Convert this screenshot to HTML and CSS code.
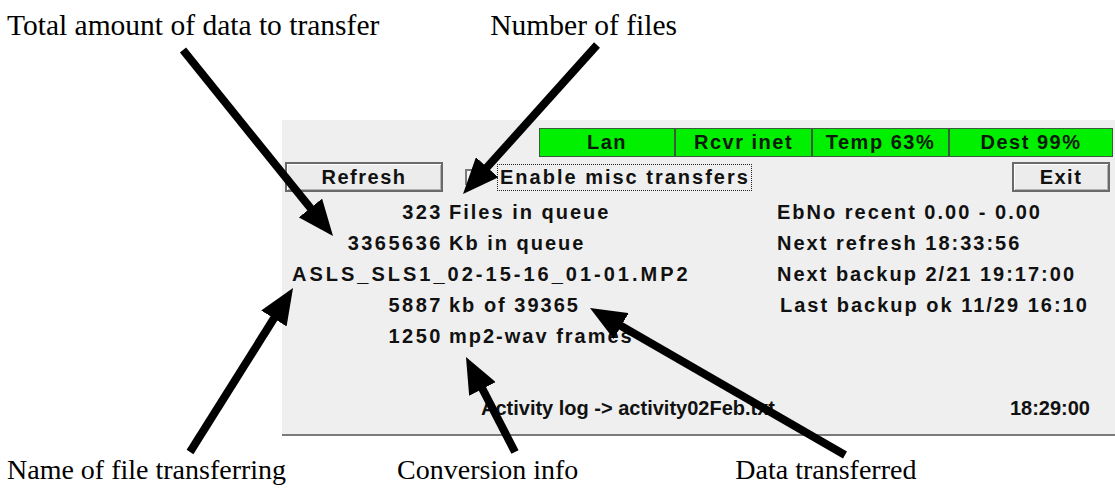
FILE: index.html
```html
<!DOCTYPE html>
<html>
<head>
<meta charset="utf-8">
<link rel="stylesheet" href="styles.css">
</head>
<body>
<div class="page">
  <div class="captions top">
    <span class="cap cap-total">Total amount of data to transfer</span>
    <span class="cap cap-files">Number of files</span>
  </div>

  <div class="panel">
    <div class="status">
      <div class="cell c1">Lan</div>
      <div class="cell c2">Rcvr inet</div>
      <div class="cell c3">Temp 63%</div>
      <div class="cell c4">Dest 99%</div>
    </div>
    <div class="toolbar">
      <div class="btn btn-refresh">Refresh</div>
      <div class="check"></div>
      <div class="focus">Enable misc transfers</div>
      <div class="btn btn-exit">Exit</div>
    </div>
    <div class="info">
      <div class="left">
        <div class="row"><span class="num">323</span><span class="lbl">Files in queue</span></div>
        <div class="row"><span class="num">3365636</span><span class="lbl">Kb in queue</span></div>
        <div class="row fname">ASLS_SLS1_02-15-16_01-01.MP2</div>
        <div class="row"><span class="num">5887</span><span class="lbl">kb of 39365</span></div>
        <div class="row"><span class="num">1250</span><span class="lbl">mp2-wav frames</span></div>
      </div>
      <div class="right">
        <div class="row">EbNo recent 0.00 - 0.00</div>
        <div class="row">Next refresh 18:33:56</div>
        <div class="row">Next backup 2/21 19:17:00</div>
        <div class="row last">Last backup ok 11/29 16:10</div>
      </div>
    </div>
    <div class="footer">
      <span class="log">Activity log -&gt; activity02Feb.txt</span>
      <span class="clock">18:29:00</span>
    </div>
  </div>

  <div class="captions bottom">
    <span class="cap cap-name">Name of file transferring</span>
    <span class="cap cap-conv">Conversion info</span>
    <span class="cap cap-data">Data transferred</span>
  </div>

  <svg class="arrows" width="1115" height="493" viewBox="0 0 1115 493">
    <defs>
      <marker id="ah" viewBox="0 0 36 30" refX="10" refY="15" markerWidth="36" markerHeight="30" markerUnits="userSpaceOnUse" orient="auto">
        <path d="M0,0 L36,15 L0,30 z" fill="#000"/>
      </marker>
    </defs>
    <g stroke="#000" stroke-width="8" marker-end="url(#ah)">
      <line x1="183" y1="50" x2="316.7" y2="215.8"/>
      <line x1="597" y1="45" x2="480.4" y2="174.7"/>
      <line x1="190" y1="452" x2="279.2" y2="310"/>
      <line x1="515" y1="452" x2="477.9" y2="380.1"/>
      <line x1="845" y1="455" x2="612.5" y2="321"/>
    </g>
  </svg>
</div>
</body>
</html>
```

FILE: styles.css
```css
html, body {
  margin: 0;
  padding: 0;
  background: #fff;
}

.page {
  position: relative;
  width: 1115px;
  height: 493px;
  overflow: hidden;
}

.captions {
  display: flex;
  font-family: "Liberation Serif", "Times New Roman", serif;
  color: #000;
  white-space: nowrap;
}

.captions.top {
  height: 120px;
  padding-left: 7px;
  padding-top: 8px;
  box-sizing: border-box;
  font-size: 29.5px;
  line-height: 34px;
}

.cap-files {
  margin-left: 111px;
}

.captions.bottom {
  padding-left: 7px;
  padding-top: 18px;
  font-size: 28px;
  line-height: 32px;
}

.cap-conv {
  margin-left: 111px;
}

.cap-data {
  margin-left: 157px;
}

.panel {
  margin-left: 282px;
  width: 833px;
  height: 314px;
  border-bottom: 2px solid #7a7a7a;
  background: #efefef;
  display: flex;
  flex-direction: column;
  font-family: "Liberation Sans", Arial, sans-serif;
  font-weight: bold;
  font-size: 20px;
  letter-spacing: 2px;
  color: #111;
  white-space: nowrap;
}

.status {
  display: flex;
  align-self: flex-end;
  margin-top: 8px;
  margin-right: 2px;
  height: 29px;
  background: #00f000;
  border: 1px solid #3c5a3c;
  box-sizing: border-box;
}

.cell {
  display: flex;
  align-items: center;
  justify-content: center;
  border-left: 2px solid #3c5a3c;
  color: #0a1a0a;
  letter-spacing: 1.5px;
}

.cell.c1 { width: 134px; border-left: none; }
.cell.c2 { width: 135px; }
.cell.c3 { width: 135px; }
.cell.c4 { width: 162px; }

.toolbar {
  display: flex;
  align-items: center;
  margin-top: 5px;
  height: 30px;
}

.btn {
  height: 30px;
  box-sizing: border-box;
  border: 2px solid #6a6a6a;
  background: #ececec;
  box-shadow: inset 1px 1px 0 #ffffff, inset -1px -1px 0 #b4b4b4;
  display: flex;
  align-items: center;
  justify-content: center;
  letter-spacing: 1.5px;
}

.btn-refresh {
  margin-left: 3px;
  width: 158px;
}

.check {
  margin-left: 22px;
  width: 16px;
  height: 16px;
  box-sizing: border-box;
  border: 2px solid #7a7a7a;
  background: #f4f4f4;
}

.focus {
  margin-left: 16px;
  height: 27px;
  width: 255px;
  box-sizing: border-box;
  border: 1px dotted #222;
  display: flex;
  align-items: center;
  padding-left: 2px;
  letter-spacing: 2px;
}

.btn-exit {
  margin-left: auto;
  margin-right: 5px;
  width: 98px;
}

.info {
  display: flex;
  margin-top: 5px;
}

.row {
  height: 31px;
  line-height: 31px;
}

.left {
  width: 495px;
}

.num {
  display: inline-block;
  width: 161px;
  text-align: right;
  letter-spacing: 2.5px;
}

.lbl {
  margin-left: 6px;
}

.row.fname {
  padding-left: 10px;
  letter-spacing: 3px;
}

.row.last {
  padding-left: 3px;
}

.footer {
  display: flex;
  margin-top: auto;
  margin-bottom: 10px;
  height: 31px;
  line-height: 31px;
  padding-left: 199px;
  letter-spacing: 0;
}

.clock {
  margin-left: auto;
  margin-right: 25px;
}

.arrows {
  position: absolute;
  left: 0;
  top: 0;
  pointer-events: none;
}
```
